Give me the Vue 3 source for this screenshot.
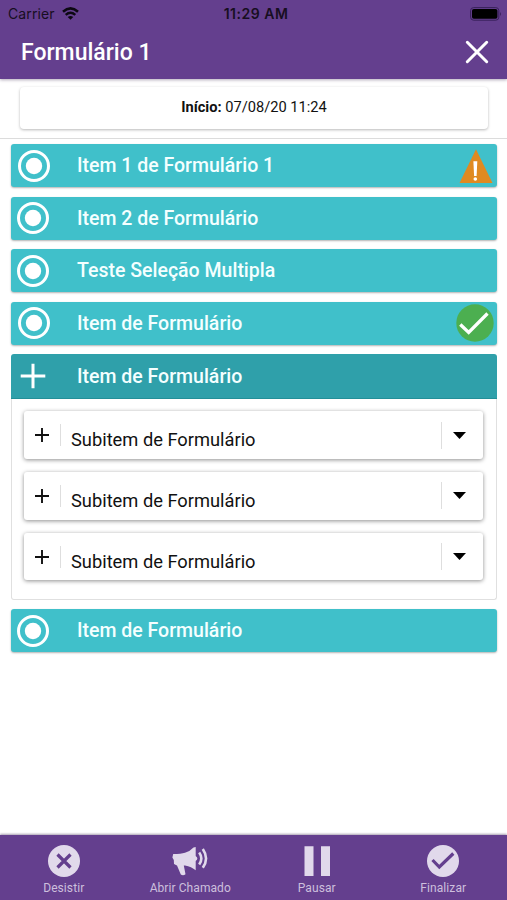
<script setup>
const before = [
  { label: 'Item 1 de Formulário 1', status: 'warning' },
  { label: 'Item 2 de Formulário' },
  { label: 'Teste Seleção Multipla' },
  { label: 'Item de Formulário', status: 'done' },
  { label: 'Item de Formulário', open: true, children: ['Subitem de Formulário', 'Subitem de Formulário', 'Subitem de Formulário'] },
  { label: 'Item de Formulário' },
]
const actions = [
  { label: 'Desistir', icon: 'cancel' },
  { label: 'Abrir Chamado', icon: 'horn' },
  { label: 'Pausar', icon: 'pause' },
  { label: 'Finalizar', icon: 'check' },
]
</script>

<template>
  <div class="screen">
    <header class="header">
      <div class="statusbar">
        <div class="carrier">
          <span>Carrier</span>
          <svg class="wifi" viewBox="0 0 17 13" width="17" height="13">
            <path d="M1 4.7Q8.500-1.900 16 4.700" fill="none" stroke="#0c0812" stroke-width="2.600" />
            <path d="M3.700 7.900Q8.500 3.700 13.300 7.900" fill="none" stroke="#0c0812" stroke-width="2.400" />
            <path d="M8.500 12.800L5.700 10Q8.500 7.800 11.300 10Z" fill="#0c0812" />
          </svg>
        </div>
        <span class="clock">11:29 AM</span>
        <svg class="battery" viewBox="0 0 32 14" width="32" height="14">
          <rect x="0.600" y="0.600" width="28.200" height="12.600" rx="3" fill="none" stroke="#38205a" stroke-width="1" />
          <rect x="2" y="2" width="25.400" height="9.800" rx="1.800" fill="#000" />
          <path d="M30.100 4.900Q32 6.900 30.100 8.900Z" fill="#38205a" />
        </svg>
      </div>
      <div class="titlebar">
        <h1>Formulário 1</h1>
        <svg viewBox="0 0 24 24" width="24" height="24">
          <path d="M2.300 2.300L21.700 21.700M21.700 2.300L2.300 21.700" stroke="#fff" stroke-width="3" stroke-linecap="round" />
        </svg>
      </div>
    </header>

    <section class="info">
      <div class="info-card"><p><b>Início:</b> 07/08/20 11:24</p></div>
    </section>

    <main class="list">
      <article v-for="(item, i) in before" :key="i" class="item" :class="{ open: item.open, flagged: item.status }">
        <div class="bar">
          <svg v-if="item.open" class="lead" viewBox="0 0 34 34" width="34" height="34">
            <path d="M4.700 17H29.300M17 4.700V29.300" stroke="#fff" stroke-width="3" />
          </svg>
          <svg v-else class="lead" viewBox="0 0 34 34" width="34" height="34">
            <circle cx="17" cy="17" r="14.500" fill="none" stroke="#fff" stroke-width="3" />
            <circle cx="17" cy="17" r="8.200" fill="#fff" />
          </svg>
          <span class="label">{{ item.label }}</span>
          <svg v-if="item.status === 'warning'" class="warn" viewBox="0 0 34 34" width="34" height="34">
            <path d="M17 0.300L33.500 34H0.500Z" fill="#e08a20" />
            <path d="M14.400 12.300H18.300L17.600 27H15.100Z" fill="#fff" />
            <circle cx="16.300" cy="30" r="1.800" fill="#fff" />
          </svg>
          <svg v-if="item.status === 'done'" class="done" viewBox="0 0 38 38" width="38" height="38">
            <circle cx="19" cy="19" r="18.700" fill="#4caf50" />
            <path d="M4.300 20.500L12.700 28.500L31.500 9.500" fill="none" stroke="#fff" stroke-width="3.300" />
          </svg>
        </div>
        <div v-if="item.open" class="panel">
          <div v-for="(child, j) in item.children" :key="j" class="sub">
            <svg class="plus" viewBox="0 0 14 14" width="14" height="14">
              <path d="M0 7H14M7 0V14" stroke="#111" stroke-width="1.900" />
            </svg>
            <i class="rule left"></i>
            <span class="sub-label">{{ child }}</span>
            <i class="rule right"></i>
            <svg class="caret" viewBox="0 0 13 7" width="13" height="7"><path d="M0 0H13L6.500 7Z" fill="#000" /></svg>
          </div>
        </div>
      </article>
    </main>

    <footer class="footer">
      <div v-for="a in actions" :key="a.label" class="action">
        <svg v-if="a.icon === 'cancel'" viewBox="0 0 36 32" width="36" height="32">
          <circle cx="18" cy="16" r="16" fill="#e1d9eb" />
          <path d="M11.500 9.500L24.500 22.500M24.500 9.500L11.500 22.500" stroke="#643f8e" stroke-width="3.200" />
        </svg>
        <svg v-else-if="a.icon === 'horn'" viewBox="0 0 36 32" width="36" height="32">
          <path d="M1.200 9Q9 9 13 7.700Q18.500 5.800 21.500 2.400L23.700 2.100V11Q27 13.500 23.700 16V25.300Q19.500 21.500 13 20.400L11.800 20.600L13.500 29.300Q11 31 8.800 29.400L5 20.400L2 19L1.800 15L.4 12.500Z" fill="#e1d9eb" />
          <path d="M27.200 7.500Q31.500 13.500 27.200 19.500M30.800 4Q37.300 13.500 30.800 22.800" fill="none" stroke="#e1d9eb" stroke-width="2.600" />
        </svg>
        <svg v-else-if="a.icon === 'pause'" viewBox="0 0 36 32" width="36" height="32">
          <path d="M5.500 1.300H14.500V31H5.500ZM22 1.300H31V31H22Z" fill="#e1d9eb" />
        </svg>
        <svg v-else viewBox="0 0 36 32" width="36" height="32">
          <circle cx="18" cy="16" r="16" fill="#e1d9eb" />
          <path d="M7.500 15L14.300 22L28.300 8.500" fill="none" stroke="#643f8e" stroke-width="3.200" />
        </svg>
        <span>{{ a.label }}</span>
      </div>
    </footer>
  </div>
</template>

<style>
body { margin: 0; background: #fff; }
</style>

<style scoped>
.screen {
  display: flex;
  flex-direction: column;
  height: 900px;
  overflow: hidden;
  box-sizing: border-box;
  font-family: Roboto, sans-serif;
  background: #fff;
}
.header {
  flex: none;
  height: 79px;
  background: #643f8e;
  box-shadow: 0 1px 3px rgba(60, 40, 80, .4);
}
.statusbar {
  display: grid;
  grid-template-columns: 1fr auto 1fr;
  align-items: center;
  height: 27px;
  padding: 0 6px 0 8px;
  font-family: Inter, sans-serif;
  font-size: 14px;
  color: #170e21;
}
.carrier { display: flex; align-items: center; gap: 7px; }
.carrier span { letter-spacing: .1px; }
.clock { font-weight: 600; font-size: 14px; letter-spacing: .5px; padding-left: 3px; }
.battery { justify-self: end; margin-right: -1px; }
.titlebar {
  display: flex;
  align-items: center;
  justify-content: space-between;
  height: 50px;
  padding: 0 18px 0 21px;
}
h1 { margin: 0; font-size: 23px; font-weight: 500; color: #fff; }
.info {
  flex: none;
  height: 60px;
  box-sizing: border-box;
  padding: 8px 19px 0 20px;
  border-bottom: 1px solid #dcdcdc;
}
.info-card {
  display: flex;
  align-items: center;
  justify-content: center;
  height: 42px;
  box-sizing: border-box;
  padding-bottom: 2px;
  border-radius: 4px;
  box-shadow: 0 1px 3px rgba(0, 0, 0, .28);
}
.info-card p { margin: 0; font-size: 14.650px; color: #111; }
.info-card b { font-weight: 700; }
.list {
  flex: 1;
  display: flex;
  flex-direction: column;
  gap: 9.500px;
  padding: 5px 10px 0 11px;
}
.bar {
  display: flex;
  align-items: center;
  height: 43px;
  border-radius: 3px;
  background: #40c0ca;
  box-shadow: 0 1px 2px rgba(0, 0, 0, .3);
  padding-left: 5px;
}
.flagged .bar { padding-left: 6px; }
.flagged .label { margin-left: 26px; }
.open .bar {
  height: 45px;
  box-sizing: border-box;
  border-radius: 3px 3px 0 0;
  background: #2fa0aa;
  box-shadow: none;
  border-bottom: 1px solid #238f98;
}
.lead { flex: none; }
.label {
  flex: 1;
  margin-left: 27px;
  font-size: 19.500px;
  font-weight: 500;
  color: #f4ffff;
  white-space: nowrap;
}
.warn { margin-right: 4px; }
.done { margin-right: 3px; }
.panel {
  display: flex;
  flex-direction: column;
  gap: 13px;
  height: 200.500px;
  box-sizing: border-box;
  padding: 12.300px 13px 0 12px;
  border: 1px solid #e0e0e0;
  border-top: 0;
  border-radius: 0 0 3px 3px;
}
.sub {
  display: flex;
  align-items: center;
  flex: none;
  height: 47.700px;
  padding: 0 17px 0 11px;
  border-radius: 3px;
  background: #fff;
  box-shadow: 0 1px 4px rgba(0, 0, 0, .45);
}
.rule { flex: none; width: 1px; background: #dedede; }
.rule.left { height: 22px; margin-left: 11px; }
.rule.right { height: 27px; margin-right: 11px; }
.sub-label { flex: 1; margin-left: 10px; padding-top: 9px; font-size: 18.300px; color: #111; }
.footer {
  flex: none;
  display: grid;
  grid-template-columns: repeat(4, 126.500px);
  justify-content: center;
  height: 65px;
  box-sizing: border-box;
  background: #643f8e;
  box-shadow: 0 -1px 2px rgba(60, 40, 80, .45);
}
.action {
  display: flex;
  flex-direction: column;
  align-items: center;
  gap: 4px;
  padding-top: 10px;
  font-size: 12px;
  line-height: 14px;
  letter-spacing: .08px;
  color: #cdbfdd;
}
</style>
